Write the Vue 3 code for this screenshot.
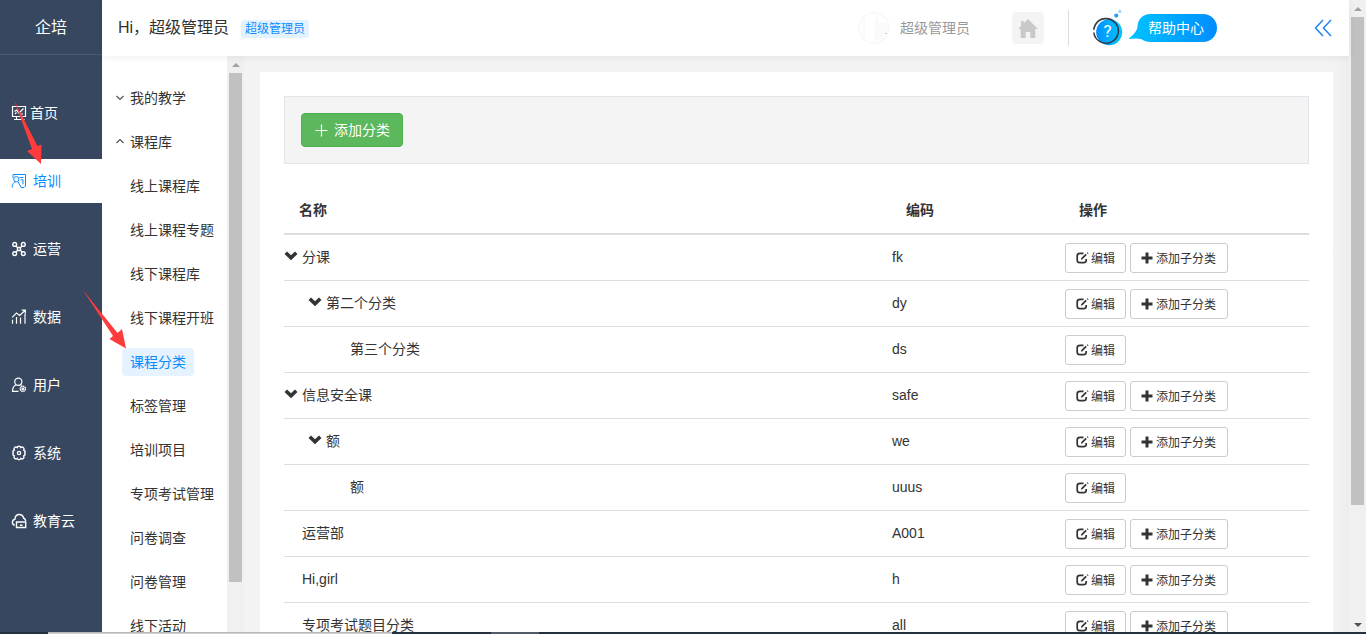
<script setup>
const nav = [
  { label: '首页', icon: 'home' },
  { label: '培训', icon: 'train', active: true },
  { label: '运营', icon: 'cmd' },
  { label: '数据', icon: 'chart' },
  { label: '用户', icon: 'person' },
  { label: '系统', icon: 'gear' },
  { label: '教育云', icon: 'cloud' },
]
const menu = [
  { label: '我的教学', caret: 'down' },
  { label: '课程库', caret: 'up' },
  { label: '线上课程库' },
  { label: '线上课程专题' },
  { label: '线下课程库' },
  { label: '线下课程开班' },
  { label: '课程分类', active: true },
  { label: '标签管理' },
  { label: '培训项目' },
  { label: '专项考试管理' },
  { label: '问卷调查' },
  { label: '问卷管理' },
  { label: '线下活动' },
]
const rows = [
  { name: '分课', code: 'fk', level: 0, open: true, add: true },
  { name: '第二个分类', code: 'dy', level: 1, open: true, add: true },
  { name: '第三个分类', code: 'ds', level: 2 },
  { name: '信息安全课', code: 'safe', level: 0, open: true, add: true },
  { name: '额', code: 'we', level: 1, open: true, add: true },
  { name: '额', code: 'uuus', level: 2 },
  { name: '运营部', code: 'A001', level: 0, add: true },
  { name: 'Hi,girl', code: 'h', level: 0, add: true },
  { name: '专项考试题目分类', code: 'all', level: 0, add: true },
]
</script>

<template>
  <div class="page">
    <aside class="side">
      <div class="brand">企培</div>
      <nav class="nav">
        <div v-for="n in nav" :key="n.label" class="nav-item" :class="[n.icon, { active: n.active }]">
          <svg class="nav-icon" viewBox="0 0 16 16" width="16" height="16">
            <g v-if="n.icon === 'home'">
              <path d="M1.500 1.500h13v10h-13zM3 14.500h10.500M5.500 11.500v3M10.500 11.500v3" />
              <path d="M3.500 6.500L5.500 5 8 8l4.500-4.500M4 9l1.500-1.500M9.500 9H12" />
            </g>
            <g v-else-if="n.icon === 'train'" stroke-width="1">
              <path d="M2 5V1.500h12.500v11.500l-1.500 1.500H10" />
              <circle cx="5.300" cy="6.200" r="2.600" />
              <path d="M1.200 14.500c0-3.300 1.400-5.400 3.600-5.700M6.800 8.400L10 14.200M8.500 4.500h4M9.500 6.800H12v4.500" />
            </g>
            <g v-else-if="n.icon === 'cmd'" stroke-width="1.400">
              <circle cx="3.700" cy="3.400" r="1.900" /><circle cx="12.300" cy="3.400" r="1.900" />
              <circle cx="3.700" cy="12.600" r="1.900" /><circle cx="12.300" cy="12.600" r="1.900" />
              <path d="M4.800 5L6.500 6.500h3L11.200 5M4.800 11l1.700-1.500h3L11.200 11M6.500 6.500v3M9.500 6.500v3" />
            </g>
            <g v-else-if="n.icon === 'chart'">
              <path d="M1.500 14.800v-4M5.500 14.800V8M9.500 14.800V8.500M14 14.800V5M1.200 8.300L5.500 4l3.200 2.500 5.300-5M10.800 1.200h3.500v3.500" />
            </g>
            <g v-else-if="n.icon === 'person'">
              <circle cx="7.300" cy="4.700" r="3.600" />
              <path d="M5 7.700C2.700 8.800 1.500 11 1.500 14.400h6M9.400 7.700l1.300.7" />
              <circle cx="11.800" cy="11.800" r="2.600" stroke-width="1.500" stroke-dasharray="1.500 .5" />
              <circle cx="11.800" cy="11.800" r=".8" />
            </g>
            <g v-else-if="n.icon === 'gear'" stroke-width="1.400">
              <path d="M6.200 2.600a1.900 1.900 0 0 1 3.600 0a1.900 1.900 0 0 1 2.900 2.400a1.900 1.900 0 0 1 1 3a1.900 1.900 0 0 1-1 3a1.900 1.900 0 0 1-2.900 2.400a1.900 1.900 0 0 1-3.600 0a1.900 1.900 0 0 1-2.900-2.400a1.900 1.900 0 0 1-1-3a1.900 1.900 0 0 1 1-3a1.900 1.900 0 0 1 2.900-2.400z" />
              <circle cx="8" cy="8" r="1.600" />
            </g>
            <g v-else stroke-width="1.400">
              <path d="M3.800 12.300C2 11.800 1.400 10.700 1.400 9.500c0-1.700 1-2.900 2.500-3.200C4.200 3.500 5.900 1.500 8.200 1.500c2.300 0 3.900 1.400 4.400 3.500 1.300.6 2 1.500 2.100 3" />
              <path d="M5.500 9h9.200v5.500H5.500zM9 12.200h2.500" />
            </g>
          </svg>
          <span>{{ n.label }}</span>
        </div>
      </nav>
    </aside>

    <div class="body">
      <header class="top">
        <span class="hello">Hi，超级管理员</span>
        <span class="tag">超级管理员</span>
        <div class="user">
          <svg class="avatar" viewBox="0 0 32 32" width="32" height="32">
            <circle cx="16" cy="16" r="15" fill="#fff" stroke="#f8f8f8" stroke-width="1.500" />
            <path d="M6 6v21M19 2v9h-2v15q0 2-2 3" fill="none" stroke="#f6f6f6" />
            <path d="M17 11h13v10h-3l-2 6-8 1z" fill="#fafafa" />
            <path d="M27 21h2v1h-2z" fill="#ccc" />
          </svg>
          <span class="user-name">超级管理员</span>
          <div class="house">
            <svg viewBox="0 0 20 19" width="20" height="19">
              <path d="M10 0l10 10h-2.700v9h-5v-6H7.700v6h-5v-9H0l3-3V2h2.700v2.300z" fill="#c9c9c9" />
            </svg>
          </div>
          <div class="split"></div>
          <svg class="help" viewBox="0 0 128 40" width="128" height="40">
            <defs>
              <linearGradient id="bubble"><stop offset="0" stop-color="#00c3ff" /><stop offset="1" stop-color="#008dff" /></linearGradient>
              <linearGradient id="ball"><stop offset="0" stop-color="#008fff" /><stop offset="1" stop-color="#00c9ff" /></linearGradient>
            </defs>
            <circle cx="16.200" cy="22.300" r="13" fill="url(#ball)" />
            <path d="M.8 22.500A12.300 12.300 0 1 0 2.500 14.500M.8 19.800A12.300 12.300 0 0 1 2.500 14.500" fill="none" stroke="#333c46" stroke-width="1.600" />
            <circle cx="23.300" cy="5.600" r="2.100" fill="#2c9dff" /><circle cx="26.800" cy="1.400" r="1.600" fill="#9cd5fb" />
            <text x="14.400" y="27" text-anchor="middle" class="q">?</text>
            <path d="M57 4h53a14 14 0 0 1 0 28H57c-3 0-6-1-9-3-4-1-8-.5-12.500 0 5-4.500 9-8 9-13C45 9 50 4 57 4z" fill="url(#bubble)" />
            <text x="55" y="23" class="help-text">帮助中心</text>
          </svg>
          <svg class="collapse" viewBox="0 0 18 18" width="18" height="18">
            <path d="M9 1L1.500 9 9 17M17 1L9.500 9l7.500 8" fill="none" stroke="#2485f5" stroke-width="1.500" />
          </svg>
        </div>
      </header>

      <div class="content">
        <div class="menu">
          <div v-for="m in menu" :key="m.label" class="menu-row">
            <svg class="caret" viewBox="0 0 8 6" width="8" height="6">
              <path v-if="m.caret === 'down'" d="M.5 1L4 4.500 7.500 1" />
              <path v-else-if="m.caret === 'up'" d="M.5 4L4 .5l3.500 3.500" />
            </svg>
            <span class="menu-label" :class="{ active: m.active }">{{ m.label }}</span>
          </div>
        </div>
        <div class="bar inner"><i class="arrow"></i><b class="thumb"></b></div>
        <main class="main">
          <section class="card">
            <div class="tools">
              <button class="create">
                <svg viewBox="0 0 13 13" width="13" height="13"><path d="M6.500 .5v12M.5 6.500h12" stroke="#fff" stroke-width="1.200" /></svg>
                <span>添加分类</span>
              </button>
            </div>
            <div class="line head"><span>名称</span><span>编码</span><span>操作</span></div>
            <div v-for="r in rows" :key="r.code" class="line">
              <div class="name" :class="'lv' + r.level">
                <svg class="chev" viewBox="0 0 14 10" width="14" height="10">
                  <path v-if="r.open" d="M.5 3L3 .5l4 3.700L11 .5 13.500 3 7 9.300z" fill="#333" />
                </svg>
                <span>{{ r.name }}</span>
              </div>
              <div>{{ r.code }}</div>
              <div class="ops">
                <button class="btn edit">
                  <svg viewBox="0 0 13 12" width="13" height="12">
                    <path d="M7.500 1.300H4Q1.200 1.300 1.200 4v4Q1.200 10.700 4 10.700h3.500Q10.200 10.700 10.200 8V7" fill="none" stroke="#333" stroke-width="1.700" />
                    <path d="M5.300 6L9.600 1.700l1.200 1.200L6.500 7.200 4.800 7.800zM10.700 .900l.7-.7L12.600 1.400l-.7.7z" fill="#333" />
                  </svg>
                  <span>编辑</span>
                </button>
                <button v-if="r.add" class="btn more">
                  <svg viewBox="0 0 12 12" width="12" height="12"><path d="M6 .5v11M.5 6h11" stroke="#333" stroke-width="3" /></svg>
                  <span>添加子分类</span>
                </button>
              </div>
            </div>
          </section>
        </main>
      </div>
    </div>

    <div class="bar outer"><i class="arrow"></i><b class="thumb"></b><i class="arrow end"></i></div>

    <svg class="pointers" viewBox="0 0 140 360" width="140" height="360">
      <path d="M14 100L37.500 146l4-1.500L41 164 27 151l5-2z" fill="#ff3b3b" />
      <path d="M82.500 289.500l35 43.500 4.500-4 4 19.500-16.500-9.500 3.500-3z" fill="#ff3b3b" />
    </svg>
    <div class="edge"><i></i><b></b></div>
  </div>
</template>

<style>
body { margin: 0; overflow: hidden; }
</style>

<style scoped>
* { box-sizing: border-box; }
svg { display: block; flex: none; }
.page {
  position: relative; display: flex; width: 1366px; height: 634px; overflow: hidden;
  font: 14px/20px "Liberation Sans", "Noto Sans CJK SC", sans-serif; color: #333; background: #f3f3f3;
}
.side { width: 102px; flex: none; background: #37475f; color: #fff; }
.brand { height: 55px; border-bottom: 1px solid #4d5c72; font-size: 16px; line-height: 55px; text-align: center; }
.nav { display: flex; flex-direction: column; gap: 24px; padding-top: 36px; }
.nav-item { height: 44px; display: flex; align-items: center; gap: 6px; padding-left: 11px; }
.nav-item.home { gap: 3px; }
.nav-item.active { background: #fff; color: #0a8cff; }
.nav-icon { fill: none; stroke: currentColor; stroke-width: 1.2; }
.body { flex: 1; min-width: 0; display: flex; flex-direction: column; }
.top { position: relative; z-index: 1; height: 56px; flex: none; display: flex; align-items: center; padding: 0 17px 0 16px; background: #fff; box-shadow: 0 1px 8px rgba(0,0,0,.07); }
.hello { font-size: 16px; width: 123px; white-space: nowrap; }
.tag { width: 68px; height: 18px; margin-top: 1px; border-radius: 3px; background: #e4f2ff; color: #0a8cff; font-size: 12px; line-height: 18px; text-align: center; }
.user { margin-left: auto; display: flex; align-items: center; }
.user-name { color: #999; margin: 0 42px 0 10px; }
.house { width: 32px; height: 32px; border-radius: 4px; background: #f4f4f4; display: grid; place-items: center; }
.split { width: 1px; height: 36px; background: #ddd; margin: 0 24px; }
.help { margin-top: 4px; overflow: visible; }
.q { fill: #fff; font: 17px Roboto, sans-serif; }
.help-text { fill: #fff; font: 14px "Noto Sans CJK SC", sans-serif; }
.collapse { margin-left: 93px; }
.content { flex: 1; min-height: 0; display: flex; }
.menu { width: 125px; flex: none; display: flex; flex-direction: column; gap: 16px; padding: 28px 0 0 14px; background: #fff; overflow: hidden; }
.menu-row { display: flex; align-items: center; height: 28px; flex: none; white-space: nowrap; }
.caret { fill: none; stroke: #555; stroke-width: 1.2; margin-right: -2px; }
.menu-label { padding: 0 8px; line-height: 28px; border-radius: 4px; }
.menu-label.active { background: #e5f2ff; color: #0a8cff; }
.bar { width: 17px; flex: none; display: flex; flex-direction: column; align-items: center; background: #f0f0f0; }
.arrow { border: 4px solid transparent; border-top: 0; border-bottom-color: #a2a2a2; margin: 7px 0 6px; }
.thumb { width: 13px; background: #c1c1c1; }
.inner .thumb { height: 509px; }
.outer .thumb { height: 488px; }
.arrow.end { border: 4px solid transparent; border-bottom: 0; border-top-color: #505050; margin: auto 0 7px; }
.main { flex: 1; padding: 16px 16px 0; min-width: 0; overflow: hidden; background: linear-gradient(90deg, #f3f3f3 1089px, #ededed 1105px); }
.card { height: 700px; padding: 24px; background: #fff; }
.tools { height: 68px; padding: 16px; border: 1px solid #e2e5ec; background: #f4f4f4; margin-bottom: 23px; }
button { font-family: inherit; color: inherit; display: flex; align-items: center; white-space: nowrap; }
.create { width: 102px; height: 34px; gap: 6px; padding: 0 0 0 13px; border: 1px solid #4cae4c; border-radius: 4px; background: #5cb85c; color: #fff; font-size: 14px; }
.create span { padding-bottom: 2px; }
.line { display: grid; grid-template-columns: 608px 173px 1fr; align-items: center; height: 46px; padding-bottom: 1px; border-bottom: 1px solid #ddd; }
.head { height: 48px; padding-bottom: 0; border-bottom-width: 2px; font-weight: 700; padding-left: 15px; grid-template-columns: 607px 173px 1fr; }
.name { display: flex; align-items: center; gap: 4px; }
.name.lv1 { padding-left: 24px; }
.name.lv2 { padding-left: 48px; }
.chev { position: relative; top: -1px; }
.ops { display: flex; gap: 4px; padding-top: 2px; }
.btn { height: 30px; gap: 3px; padding: 0 0 0 10px; font-size: 12px; background: #fff; border: 1px solid #ccc; border-radius: 3px; }
.btn span { padding-bottom: 2px; }
.edit { width: 61px; gap: 2px; }
.more { width: 98px; }
.pointers { position: absolute; left: 0; top: 0; z-index: 3; }
.edge { position: absolute; left: 0; bottom: 0; z-index: 4; width: 100%; height: 2px; display: flex; background: linear-gradient(90deg, #24303d 491px, #535c66 491px, #535c66 539px, #24303d 539px); }
.edge i { width: 48px; }
.edge b { width: 344px; background: #d0d0d0; border-top: 1px solid #b8b8b8; }
</style>
